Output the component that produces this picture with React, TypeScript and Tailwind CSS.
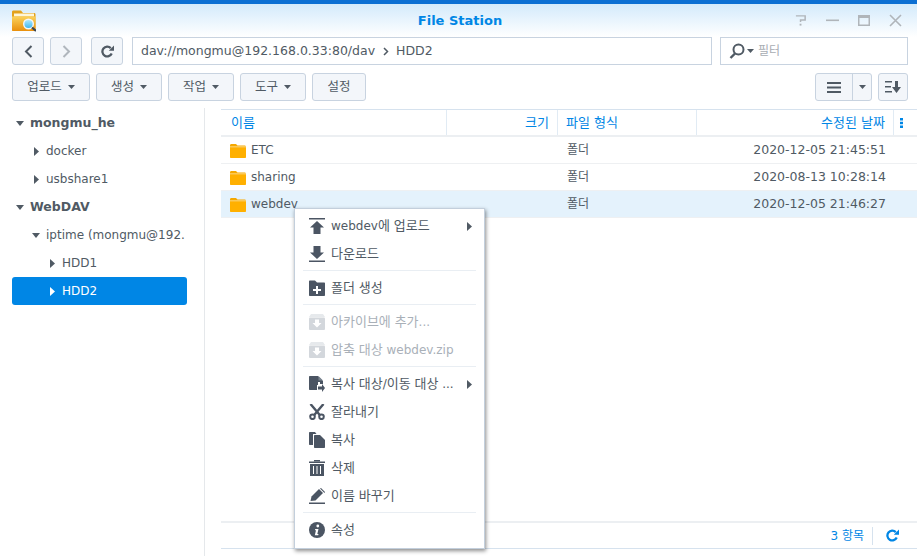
const sans = 'font-["DejaVu_Sans","Noto_Sans_CJK_KR",sans-serif]';

const Caret = ({ className = '' }: { className?: string }) => (
  <svg width="7" height="4" viewBox="0 0 7 4" className={`shrink-0 ${className}`}>
    <path d="M0 0h7L3.5 4z" fill="currentColor" />
  </svg>
);

const ArrowRight = ({ className = '' }: { className?: string }) => (
  <svg width="5" height="9" viewBox="0 0 5 9" className={`shrink-0 ${className}`}>
    <path d="M0 0l5 4.5L0 9z" fill="currentColor" />
  </svg>
);

const ArrowDown = ({ className = '' }: { className?: string }) => (
  <svg width="8" height="5" viewBox="0 0 8 5" className={`shrink-0 ${className}`}>
    <path d="M0 0h8L4 5z" fill="currentColor" />
  </svg>
);

const Folder = () => (
  <svg width="16" height="15" viewBox="0 0 16 15" className="shrink-0">
    <path d="M0 2.5C0 1.5.5 1 1.500 1H6l1.500 1.500h7c1 0 1.500.5 1.500 1.500v1H0z" fill="#f5a800" />
    <rect x="0" y="3.500" width="16" height="1" fill="#ffe9b0" />
    <path d="M0 4.500h16V14c0 .6-.4 1-1 1H1c-.6 0-1-.4-1-1z" fill="#ffb000" />
  </svg>
);

const AppIcon = () => (
  <svg width="24" height="22" viewBox="0 0 24 22" className="block">
    <defs>
      <linearGradient id="appFolder" x1="0" y1="0" x2="0" y2="1">
        <stop offset="0" stopColor="#fbd25a" />
        <stop offset="1" stopColor="#e98f0c" />
      </linearGradient>
      <linearGradient id="appLens" x1="0" y1="0" x2="0" y2="1">
        <stop offset="0" stopColor="#b8ecff" />
        <stop offset="1" stopColor="#35b4ee" />
      </linearGradient>
    </defs>
    <path d="M0 2C0 1 .6.500 1.500.500H9L11 3h11c1 0 1.500.5 1.500 1.500V20c0 .6-.4 1-1 1h-21c-.6 0-1.500-.4-1.500-1z" fill="#e3a21c" />
    <rect x="2" y="3.500" width="20" height="3" fill="#fff6d8" />
    <path d="M0 6.500h23.500V20c0 .6-.4 1-1 1h-21c-.6 0-1.500-.4-1.500-1z" fill="url(#appFolder)" />
    <circle cx="16.500" cy="14" r="4.800" fill="url(#appLens)" stroke="#f4f7f9" strokeWidth="1.400" />
    <path d="M20 17.500l4 3.500" stroke="#3b4650" strokeWidth="2.200" />
  </svg>
);

const ic = '#4b5563';

const UploadIcon = () => (
  <svg width="16" height="16" viewBox="0 0 16 16"><rect y="0" width="16" height="1.500" fill={ic} /><path d="M8 3l7 6.500h-3.500V16h-7V9.500H1z" fill={ic} /></svg>
);
const DownloadIcon = () => (
  <svg width="16" height="16" viewBox="0 0 16 16"><path d="M4.500 0h7v6.500H15L8 13 1 6.500h3.500z" fill={ic} /><rect y="14.500" width="16" height="1.500" fill={ic} /></svg>
);
const NewFolderIcon = () => (
  <svg width="16" height="16" viewBox="0 0 16 16"><path d="M0 1.500C0 .8.400.500 1 .500h5L8 2.500h7c.6 0 1 .4 1 1V15c0 .6-.4 1-1 1H1c-.6 0-1-.4-1-1z" fill={ic} /><path d="M7 6h2v3h3v2H9v3H7v-3H4V9h3z" fill="#fff" /></svg>
);
const ArchiveIcon = () => (
  <svg width="16" height="16" viewBox="0 0 16 16"><path d="M2 0h12l2 3H0z" fill="#e6e9ec" /><rect y="3.500" width="16" height="12.500" rx="1" fill="#d3d7dc" /><path d="M6 5.500h4v3.500h2.500L8 13.500 3.500 9H6z" fill="#fff" /></svg>
);
const CopyMoveIcon = () => (
  <svg width="16" height="16" viewBox="0 0 16 16"><path d="M1 0h8l5 5v3h-3V6H9V9H8v5H1c-.6 0-1-.4-1-1V1c0-.6.400-1 1-1z" fill={ic} /><path d="M9.500 0l4.500 4.500H9.500z" fill="#7b8590" /><path d="M9 10.500h4V8l3 4-3 4v-2.500H9z" fill={ic} /></svg>
);
const ScissorsIcon = () => (
  <svg width="16" height="16" viewBox="0 0 16 16">
    <path d="M1.500 0l9.500 11.200M14.500 0L5 11.200" stroke={ic} strokeWidth="2.400" fill="none" />
    <circle cx="3.500" cy="12.800" r="2.300" fill="#fff" stroke={ic} strokeWidth="2" />
    <circle cx="12.500" cy="12.800" r="2.300" fill="#fff" stroke={ic} strokeWidth="2" />
  </svg>
);
const CopyIcon = () => (
  <svg width="16" height="16" viewBox="0 0 16 16"><path d="M0 1c0-.6.400-1 1-1h5l1.500 2H4v11H1c-.6 0-1-.4-1-1z" fill={ic} /><path d="M5 4c0-.6.400-1 1-1h5l5 5v7c0 .6-.4 1-1 1H6c-.6 0-1-.4-1-1z" fill={ic} /></svg>
);
const TrashIcon = () => (
  <svg width="16" height="16" viewBox="0 0 16 16"><rect x="5" y="0" width="6" height="1.500" fill={ic} /><rect y="1.500" width="16" height="1.500" fill={ic} /><rect x="1" y="4" width="14" height="12" fill={ic} /><path d="M4.500 6v8M8 6v8M11.500 6v8" stroke="#fff" strokeWidth="1" /></svg>
);
const RenameIcon = () => (
  <svg width="16" height="16" viewBox="0 0 16 16"><path d="M1.500 13l1-4.500L10 1l4 4-7.500 7.500z" fill={ic} /><path d="M11 0.500l1-.500 4 4-.5 1L14.500 4z" fill={ic} /><rect y="14.500" width="16" height="1.500" fill={ic} /></svg>
);
const InfoIcon = () => (
  <svg width="16" height="16" viewBox="0 0 16 16"><circle cx="8" cy="8" r="8" fill={ic} /><circle cx="8.800" cy="4" r="1.400" fill="#fff" /><path d="M6.200 7h3.300l-1.200 5h1.200l-.3 1.200H5.800L7 8.200H6z" fill="#fff" /></svg>
);
const RefreshIcon = ({ color, size }: { color: string; size: number }) => (
  <svg width={size} height={size} viewBox="0 0 16 16">
    <path d="M13.200 10.500A6 6 0 1 1 12 3.800" fill="none" stroke={color} strokeWidth="2.800" />
    <path d="M9.500 7H16V.500z" fill={color} />
  </svg>
);

// hangul runs slightly larger than the latin text around them
const Mixed = ({ text }: { text: string }) => (
  <>
    {text.split(/([\uAC00-\uD7A3]+)/).map((part, i) =>
      i % 2 === 1 ? <span key={i} className="text-[13px]">{part}</span> : <span key={i}>{part}</span>
    )}
  </>
);

const btn = 'h-7 rounded-[3px] border border-[#c8d3e0] bg-[#f3f6fa] flex items-center justify-center text-[#505a64]';

const ToolButton = ({ label, caret = true, width }: { label: string; caret?: boolean; width: string }) => (
  <button className={`${btn} ${width} gap-[6px] text-[12.5px] ${sans}`}>
    <span>{label}</span>
    {caret && <Caret />}
  </button>
);

const TreeRow = ({ label, indent, open, bold, selected }: { label: string; indent: string; open?: boolean; bold?: boolean; selected?: boolean }) => (
  <div className={`h-7 flex items-center rounded-[3px] ${indent} ${selected ? 'bg-[#0086e5] text-white' : 'text-[#505a64]'} ${bold ? 'font-bold text-[12.5px]' : 'text-[12px]'}`}>
    <span className="w-[14px] shrink-0 flex items-center">
      {open ? <ArrowDown /> : <ArrowRight className="ml-[2px]" />}
    </span>
    <span className="whitespace-nowrap">{label}</span>
  </div>
);

const rows = [
  { name: 'ETC', date: '2020-12-05 21:45:51' },
  { name: 'sharing', date: '2020-08-13 10:28:14' },
  { name: 'webdev', date: '2020-12-05 21:46:27', selected: true },
];

type MenuEntry = { divider: true } | { label: string; icon: React.ReactNode; sub?: boolean; disabled?: boolean; divider?: false };

const menu: MenuEntry[] = [
  { label: 'webdev에 업로드', icon: <UploadIcon />, sub: true },
  { label: '다운로드', icon: <DownloadIcon /> },
  { divider: true },
  { label: '폴더 생성', icon: <NewFolderIcon /> },
  { divider: true },
  { label: '아카이브에 추가...', icon: <ArchiveIcon />, disabled: true },
  { label: '압축 대상 webdev.zip', icon: <ArchiveIcon />, disabled: true },
  { divider: true },
  { label: '복사 대상/이동 대상 ...', icon: <CopyMoveIcon />, sub: true },
  { label: '잘라내기', icon: <ScissorsIcon /> },
  { label: '복사', icon: <CopyIcon /> },
  { label: '삭제', icon: <TrashIcon /> },
  { label: '이름 바꾸기', icon: <RenameIcon /> },
  { divider: true },
  { label: '속성', icon: <InfoIcon /> },
];

const ContextMenu = () => (
  <div className="absolute left-[294px] top-[208px] w-[191px] h-[341px] bg-white border border-[#c3cfdc] shadow-[1px_2px_4px_rgba(0,0,0,0.45)] pt-[2px] px-2 text-[12px]">
    {menu.map((item, i) =>
      item.divider ? (
        <div key={i} className="h-[6px] flex items-center"><div className="h-px w-full bg-[#e9eef3]" /></div>
      ) : (
        <div key={i} className={`h-7 flex items-center pt-[2px] pl-[6px] pr-[4px] ${item.disabled ? 'text-[#a9b0b8]' : 'text-[#505a64]'}`}>
          <span className="w-[16px] h-[16px] mr-[6px] shrink-0">{item.icon}</span>
          <span className="flex-1 whitespace-nowrap"><Mixed text={item.label} /></span>
          {item.sub && <ArrowRight className="text-[#505a64]" />}
        </div>
      )
    )}
  </div>
);

export default function App() {
  return (
    <div className={`relative w-[917px] h-[556px] overflow-hidden bg-white flex flex-col text-[12.5px] ${sans}`}>
      <div className="h-[4px] bg-[#0b6fd3] shrink-0" />
      <div className="bg-gradient-to-b from-[#d3eafb] to-white h-[33px] shrink-0 grid grid-cols-[1fr_auto_1fr] items-center px-3">
        <AppIcon />
        <div className="text-[#0086e5] font-bold text-[13px] pl-[3px]">File Station</div>
        <div className="flex items-center justify-end gap-[19px] pr-[3px] text-[#b0b5ba]">
          <svg width="12" height="13" viewBox="0 0 13 13"><path d="M1 1.500h10v4.500H6v2" fill="none" stroke="currentColor" strokeWidth="1.600" /><rect x="5" y="10" width="2" height="2" fill="currentColor" /></svg>
          <svg width="13" height="13" viewBox="0 0 13 13"><rect y="5.500" width="13" height="1.600" fill="currentColor" /></svg>
          <svg width="12" height="13" viewBox="0 0 12 13"><rect x=".75" y="1.750" width="10.500" height="9.500" fill="none" stroke="currentColor" strokeWidth="1.500" /><rect x="1" y="1" width="10" height="3" fill="currentColor" /></svg>
          <svg width="13" height="13" viewBox="0 0 13 13"><path d="M1 1l11 11M12 1L1 12" stroke="currentColor" strokeWidth="1.600" /></svg>
        </div>
      </div>
      <div className="h-7 ml-3 mr-[9px] flex shrink-0">
        <button className={`${btn} w-8`}>
          <svg width="9" height="13" viewBox="0 0 9 13"><path d="M7.500 1L2 6.500 7.500 12" fill="none" stroke="#505a64" strokeWidth="2" /></svg>
        </button>
        <button className={`${btn} w-8 ml-[6px]`}>
          <svg width="9" height="13" viewBox="0 0 9 13"><path d="M1.500 1L7 6.500 1.500 12" fill="none" stroke="#b0b6bd" strokeWidth="2" /></svg>
        </button>
        <button className={`${btn} w-8 ml-[9px]`}><RefreshIcon color="#505a64" size={13} /></button>
        <div className="w-[580px] ml-[9px] border border-[#c8d3e0] bg-white flex items-center pl-2 text-[#505a64]">
          <span>dav://mongmu@192.168.0.33:80/dav</span>
          <svg width="6" height="9" viewBox="0 0 6 9" className="ml-[8px] mr-[7px]"><path d="M1 1l3.500 3.500L1 8" fill="none" stroke="#505a64" strokeWidth="1.500" /></svg>
          <span>HDD2</span>
        </div>
        <div className="w-[188px] ml-2 border border-[#c8d3e0] bg-white flex items-center pl-2 text-[#505a64]">
          <svg width="16" height="16" viewBox="0 0 16 16"><circle cx="9.500" cy="6.500" r="5" fill="none" stroke="#505a64" strokeWidth="2" /><path d="M6 10.500L1.500 15" stroke="#505a64" strokeWidth="2.400" /></svg>
          <Caret className="ml-[2px]" />
          <span className="ml-[4px] text-[#a8adb3] text-[12px]">필터</span>
        </div>
      </div>
      <div className="h-7 mt-2 ml-3 mr-[9px] flex gap-[6px] shrink-0">
        <ToolButton label="업로드" width="w-[78px]" />
        <ToolButton label="생성" width="w-[66px]" />
        <ToolButton label="작업" width="w-[66px]" />
        <ToolButton label="도구" width="w-[66px]" />
        <ToolButton label="설정" caret={false} width="w-[54px]" />
        <div className="flex-1" />
        <div className={`${btn} w-[57px] !justify-start`}>
          <span className="w-[37px] h-full flex items-center justify-center border-r border-[#c8d3e0]">
            <svg width="14" height="11" viewBox="0 0 14 11"><path d="M0 0h14v2H0zM0 4.500h14v2H0zM0 9h14v2H0z" fill="#505a64" /></svg>
          </span>
          <span className="flex-1 flex justify-center"><Caret /></span>
        </div>
        <div className={`${btn} w-[30px]`}>
          <svg width="16" height="12" viewBox="0 0 16 12"><path d="M0 0h7v1.500H0zM0 5h6v1.500H0zM0 10h7v1.500H0z" fill="#505a64" /><path d="M10 0h3v6h3l-4.500 6L7 6h3z" fill="#505a64" /></svg>
        </div>
      </div>
      <div className="flex-1 flex mt-[7px] min-h-0">
        <div className="w-[205px] shrink-0 border-r border-[#e5e8eb] pl-3 pr-[17px] pt-px">
          <TreeRow label="mongmu_he" indent="pl-1" open bold />
          <TreeRow label="docker" indent="pl-5" />
          <TreeRow label="usbshare1" indent="pl-5" />
          <TreeRow label="WebDAV" indent="pl-1" open bold />
          <TreeRow label="iptime (mongmu@192." indent="pl-5" open />
          <TreeRow label="HDD1" indent="pl-[36px]" />
          <TreeRow label="HDD2" indent="pl-[36px]" selected />
        </div>
        <div className="flex-1 ml-4 mt-px flex flex-col min-w-0">
          <div className="h-[28px] shrink-0 flex border-t border-b-2 border-t-[#d6e2ee] border-b-[#eceff2] text-[#0086e5] text-[13px]">
            <div className="w-[226px] pl-[10px] flex items-center border-r border-[#e1ebf4]">이름</div>
            <div className="w-[111px] pr-2 flex items-center justify-end border-r border-[#e1ebf4]">크기</div>
            <div className="w-[139px] pl-2 flex items-center border-r border-[#e1ebf4]">파일 형식</div>
            <div className="w-[197px] pr-2 flex items-center justify-end border-r border-[#e1ebf4]">수정된 날짜</div>
            <div className="flex-1 flex items-center pl-[6px]">
              <svg width="3" height="10" viewBox="0 0 3 10"><path d="M0 0h3v2.500H0zM0 3.750h3v2.500H0zM0 7.500h3V10H0z" fill="#0086e5" /></svg>
            </div>
          </div>
          {rows.map((r) => (
            <div key={r.name} className={`h-[27px] shrink-0 flex items-center text-[#505a64] border-b border-[#eef0f2] ${r.selected ? 'bg-[#e4f2fc]' : ''}`}>
              <div className="w-[337px] pl-[9px] flex items-center gap-[5px] text-[12px]"><Folder /><span>{r.name}</span></div>
              <div className="w-[139px] pl-[9px] text-[12px]">폴더</div>
              <div className="w-[189px] text-right">{r.date}</div>
            </div>
          ))}
          <div className="flex-1" />
          <div className="h-[27px] shrink-0 flex items-center justify-end border-t-2 border-[#eceff2] text-[#0086e5] text-[12px]">
            <span>3 항목</span>
            <span className="w-px h-[18px] bg-[#d6e2ee] ml-2 mr-[13px]" />
            <span className="mr-[18px] flex"><RefreshIcon color="#0086e5" size={13} /></span>
          </div>
          <div className="h-[8px] shrink-0 border-t border-[#d6e2ee]" />
        </div>
      </div>
      <ContextMenu />
    </div>
  );
}
